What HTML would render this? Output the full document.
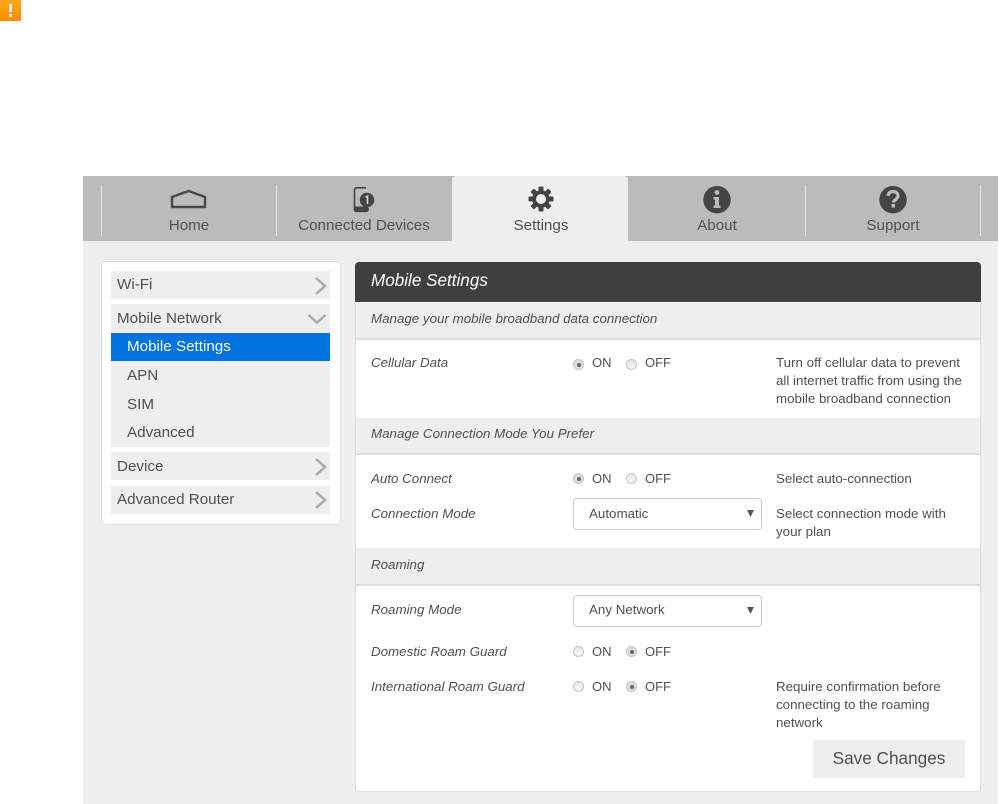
<!DOCTYPE html>
<html><head><meta charset="utf-8">
<style>
html,body{margin:0;padding:0;background:#fff}
body{width:1002px;height:804px;position:relative;overflow:hidden;font-family:"Liberation Sans",sans-serif;color:#555}
.b{position:absolute}
.t{position:absolute;white-space:nowrap;line-height:20px}
.tab{font-size:15.2px;color:#505050;text-align:center;width:176px;top:216px}
.sep{position:absolute;top:185px;width:1px;height:51px;background:#e6e6e6}
.nav{font-size:15.2px;color:#505050}
.sec{position:absolute;left:356px;width:624px;background:#eee;border-bottom:2px solid #ddd;box-sizing:border-box}
.i{font-size:13.35px;font-style:italic;color:#505050}
.h{font-size:13.35px;color:#505050}
.r{position:absolute;width:11px;height:11px;box-sizing:border-box;border:1px solid #c4c4c4;border-radius:50%;background:linear-gradient(#e8e8e8,#f6f6f6)}
.r.on{background:#ddd}
.r.on:after{content:"";position:absolute;left:2.5px;top:2.5px;width:4px;height:4px;border-radius:50%;background:#666}
.l{font-size:13px;color:#505050}
.sel{position:absolute;left:573px;width:189px;height:32px;box-sizing:border-box;border:1px solid #ccc;border-radius:4px;background:#fff}
svg{position:absolute;overflow:visible}
</style></head><body>

<div class="b" style="left:0;top:0;width:21px;height:21px;background:linear-gradient(#ffab1a,#ff8a00)"></div>
<div class="b" style="left:9px;top:4px;width:3px;height:8px;background:#fff"></div>
<div class="b" style="left:9px;top:14px;width:3px;height:3px;background:#fff"></div>

<div class="b" style="left:83px;top:176px;width:915px;height:628px;background:#eee"></div>
<div class="b" style="left:83px;top:176px;width:915px;height:65px;background:#bbb"></div>
<div class="b" style="left:452px;top:176px;width:176px;height:65px;background:#eee;border-radius:4px 4px 0 0"></div>
<div class="sep" style="left:101px"></div>
<div class="sep" style="left:276px"></div>
<div class="sep" style="left:805px"></div>
<div class="sep" style="left:980px"></div>

<svg style="left:0;top:0" width="1002" height="241">
 <path d="M172 207V197L188.500 191L205 197V207Z" fill="none" stroke="#484848" stroke-width="2.400"/>
 <path d="M366 187.800H356.500a2 2 0 0 0-2 2v20a1.500 1.500 0 0 0 1.500 1.500h10.500a1.500 1.500 0 0 0 1.500-1.500v-2" fill="none" stroke="#444" stroke-width="1.600"/>
 <path d="M355 206.500H368V211.500H355Z" fill="#444"/>
 <circle cx="367" cy="200" r="7.200" fill="#444"/>
 <path d="M365.500 197.200L367.500 196.300V204" fill="none" stroke="#ddd" stroke-width="1.600"/>
 <g fill="#444" transform="translate(541 199)">
  <circle r="8.800"/>
  <rect x="-2.500" y="-12.500" width="5" height="25" rx="1"/>
  <rect x="-2.500" y="-12.500" width="5" height="25" rx="1" transform="rotate(45)"/>
  <rect x="-2.500" y="-12.500" width="5" height="25" rx="1" transform="rotate(90)"/>
  <rect x="-2.500" y="-12.500" width="5" height="25" rx="1" transform="rotate(135)"/>
  <circle r="5" fill="#eee"/>
 </g>
 <circle cx="717" cy="199.700" r="13.700" fill="#444"/>
 <circle cx="717" cy="192.500" r="2.400" fill="#bbb"/>
 <path d="M713.500 197H719V205.500H720.500V208H713.500V205.500H715V199.500H713.500Z" fill="#bbb"/>
 <circle cx="893" cy="199.700" r="13.700" fill="#444"/>
 <path d="M888 196C888.500 192.500 890.500 191.500 893 191.500C896 191.500 898 193.500 898 196C898 199.500 893.500 199.500 893.500 202.500" fill="none" stroke="#bbb" stroke-width="3.200"/>
 <rect x="891.500" y="204" width="3.500" height="3.500" fill="#bbb"/>
</svg>

<div class="t tab" style="left:101px">Home</div>
<div class="t tab" style="left:276px">Connected Devices</div>
<div class="t tab" style="left:453px">Settings</div>
<div class="t tab" style="left:629px">About</div>
<div class="t tab" style="left:805px">Support</div>

<!-- sidebar -->
<div class="b" style="left:101px;top:261px;width:240px;height:264px;box-sizing:border-box;background:#fff;border:1px solid #ddd;border-radius:4px"></div>
<div class="b" style="left:111px;top:271px;width:219px;height:28px;background:#eee"></div>
<div class="b" style="left:111px;top:304px;width:219px;height:143px;background:#eee"></div>
<div class="b" style="left:111px;top:333px;width:219px;height:28px;background:#0073e0"></div>
<div class="b" style="left:111px;top:452px;width:219px;height:28px;background:#eee"></div>
<div class="b" style="left:111px;top:486px;width:219px;height:28px;background:#eee"></div>
<div class="t nav" style="left:117px;top:275px">Wi-Fi</div>
<div class="t nav" style="left:117px;top:309px">Mobile Network</div>
<div class="t nav" style="left:127px;top:337px;color:#fff">Mobile Settings</div>
<div class="t nav" style="left:127px;top:366px">APN</div>
<div class="t nav" style="left:127px;top:395px">SIM</div>
<div class="t nav" style="left:127px;top:423px">Advanced</div>
<div class="t nav" style="left:117px;top:457px">Device</div>
<div class="t nav" style="left:117px;top:490px">Advanced Router</div>
<svg style="left:0;top:0" width="400" height="530" fill="none" stroke="#aaa" stroke-width="2.500">
 <path d="M316 278L325 286L316 294"/>
 <path d="M308.500 315L317 322.500L325.500 315"/>
 <path d="M316 459L325 467L316 475"/>
 <path d="M316 492L325 500L316 508"/>
</svg>

<!-- panel -->
<div class="b" style="left:355px;top:262px;width:626px;height:530px;box-sizing:border-box;background:#fff;border:1px solid #ddd;border-radius:4px"></div>
<div class="b" style="left:355px;top:262px;width:626px;height:40px;background:#3f3f3f;border-radius:4px 4px 0 0"></div>
<div class="t" style="left:371px;top:271px;font-size:17.100px;font-style:italic;color:#fff">Mobile Settings</div>
<div class="sec" style="top:303px;height:37px"></div>
<div class="sec" style="top:418px;height:37px"></div>
<div class="sec" style="top:548px;height:38px"></div>
<div class="t i" style="left:371px;top:309px">Manage your mobile broadband data connection</div>
<div class="t i" style="left:371px;top:424px">Manage Connection Mode You Prefer</div>
<div class="t i" style="left:371px;top:555px">Roaming</div>

<div class="t i" style="left:371px;top:353px">Cellular Data</div>
<div class="t i" style="left:371px;top:469px">Auto Connect</div>
<div class="t i" style="left:371px;top:504px">Connection Mode</div>
<div class="t i" style="left:371px;top:600px">Roaming Mode</div>
<div class="t i" style="left:371px;top:642px">Domestic Roam Guard</div>
<div class="t i" style="left:371px;top:677px">International Roam Guard</div>

<div class="r on" style="left:573px;top:359px"></div><div class="t l" style="left:592px;top:353px">ON</div>
<div class="r" style="left:626px;top:359px"></div><div class="t l" style="left:645px;top:353px">OFF</div>
<div class="r on" style="left:573px;top:473px"></div><div class="t l" style="left:592px;top:469px">ON</div>
<div class="r" style="left:626px;top:473px"></div><div class="t l" style="left:645px;top:469px">OFF</div>
<div class="r" style="left:573px;top:646px"></div><div class="t l" style="left:592px;top:642px">ON</div>
<div class="r on" style="left:626px;top:646px"></div><div class="t l" style="left:645px;top:642px">OFF</div>
<div class="r" style="left:573px;top:681px"></div><div class="t l" style="left:592px;top:677px">ON</div>
<div class="r on" style="left:626px;top:681px"></div><div class="t l" style="left:645px;top:677px">OFF</div>

<div class="sel" style="top:498px"></div>
<div class="t l" style="left:589px;top:504px;font-size:13.350px">Automatic</div>
<div class="sel" style="top:595px"></div>
<div class="t l" style="left:589px;top:600px;font-size:13.350px">Any Network</div>
<svg style="left:0;top:0" width="1002" height="804" fill="#555">
 <path d="M747 510H754L750.500 517Z"/>
 <path d="M747 607H754L750.500 614Z"/>
</svg>

<div class="t h" style="left:776px;top:353px">Turn off cellular data to prevent</div>
<div class="t h" style="left:776px;top:371px">all internet traffic from using the</div>
<div class="t h" style="left:776px;top:389px">mobile broadband connection</div>
<div class="t h" style="left:776px;top:469px">Select auto-connection</div>
<div class="t h" style="left:776px;top:504px">Select connection mode with</div>
<div class="t h" style="left:776px;top:522px">your plan</div>
<div class="t h" style="left:776px;top:677px">Require confirmation before</div>
<div class="t h" style="left:776px;top:695px">connecting to the roaming</div>
<div class="t h" style="left:776px;top:713px">network</div>

<div class="b" style="left:813px;top:740px;width:152px;height:38px;background:#eee"></div>
<div class="t" style="left:813px;top:748px;width:152px;text-align:center;font-size:17.200px;color:#505050">Save Changes</div>

</body></html>
